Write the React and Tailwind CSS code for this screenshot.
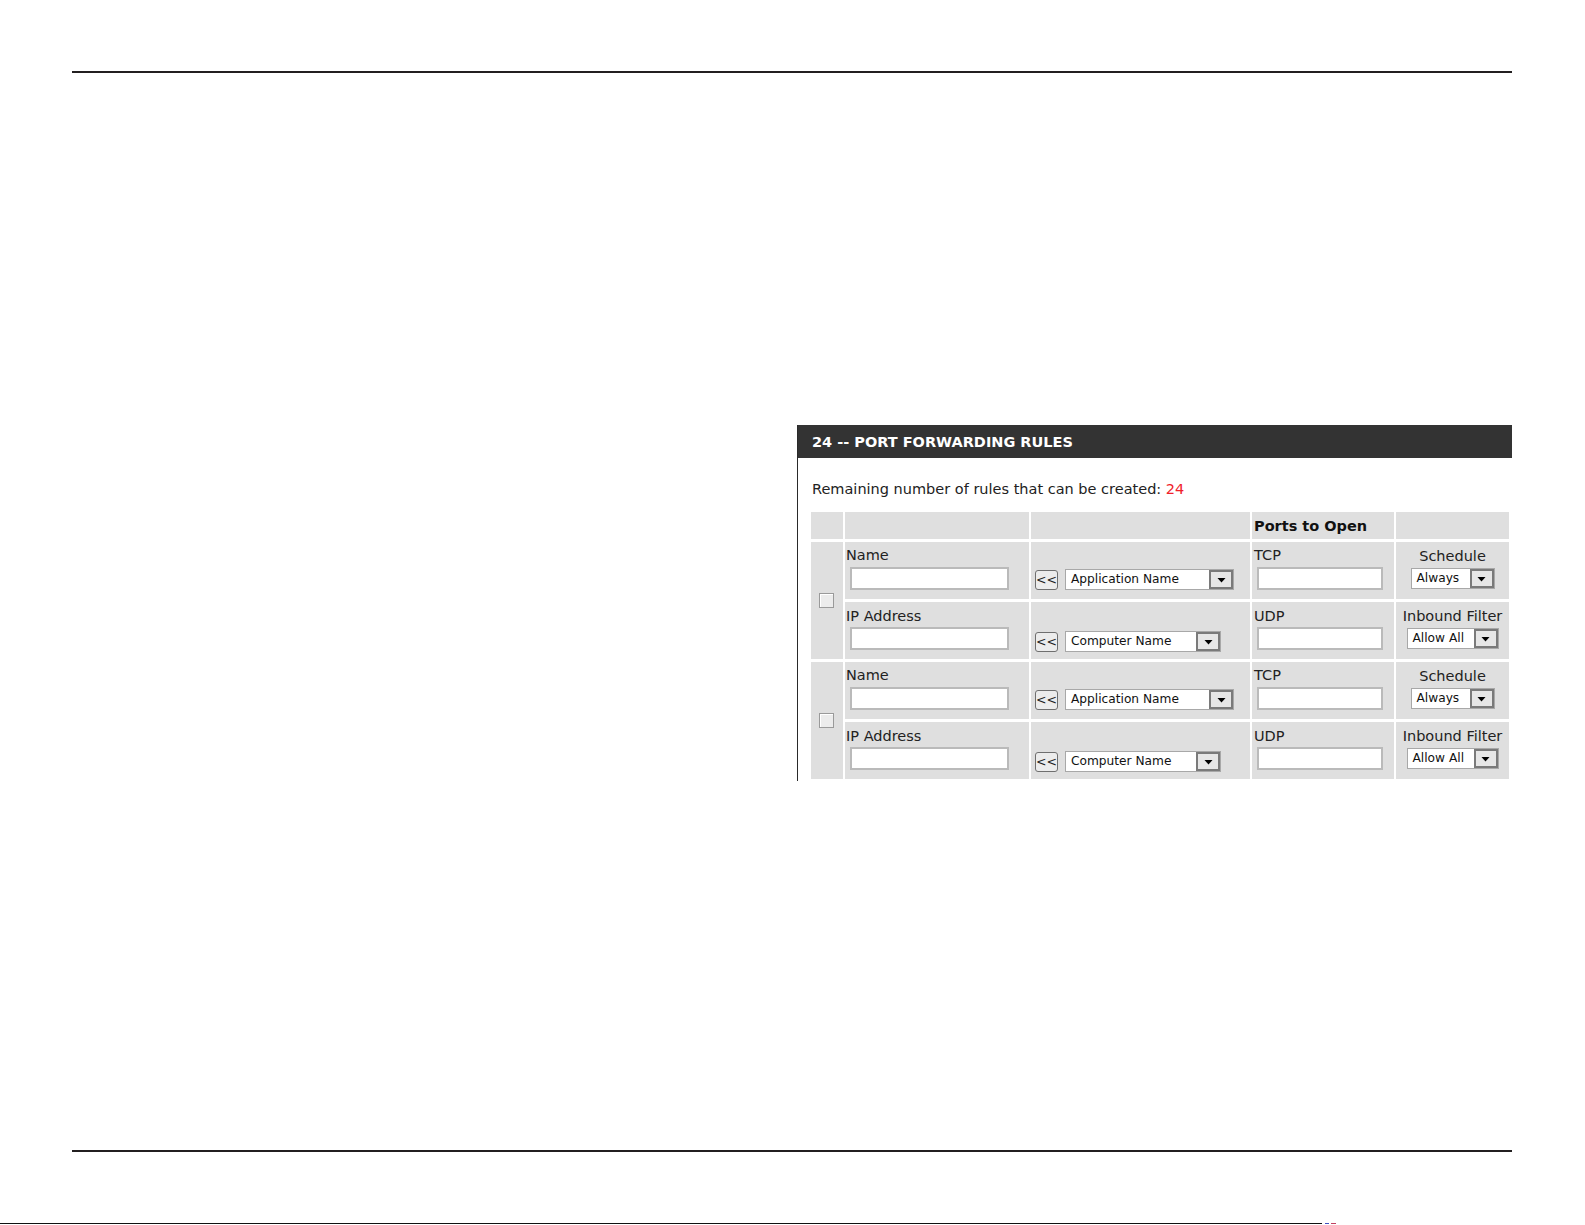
const TextBox = ({ w }) => (
  <div className={`h-[23px] ${w} bg-white border-2 border-[#bababa]`} />
);

const Arrow = () => (
  <svg width="9" height="5" viewBox="0 0 9 5">
    <path d="M0.5 0h8L4.5 4.5z" fill="#000" />
  </svg>
);

const Select = ({ label, w }) => (
  <div className={`flex ${w} h-[21px] bg-white border border-[#a8a8a8]`}>
    <span className="flex-1 pl-[5px] text-[12.2px] leading-[19px] text-[#111] whitespace-nowrap overflow-hidden">
      {label}
    </span>
    <span className="w-[24px] h-full bg-[#e6e6e6] border-2 border-[#7a7a7a] flex items-center justify-center pt-[2px]">
      <Arrow />
    </span>
  </div>
);

const BackButton = () => (
  <div className="w-[23px] h-[20px] rounded-[3px] border border-[#6f6f6f] bg-[#ececec] flex items-center justify-center text-[12.5px] leading-none text-[#222]">
    &lt;&lt;
  </div>
);

const Cell = ({ className = '', children }) => (
  <div className={`bg-[#dfdfdf] ${className}`}>{children}</div>
);

const RuleRows = () => (
  <>
    <Cell className="row-span-2 flex items-center justify-center">
      <div className="w-[15px] h-[15px] ml-[-1px] border border-[#9a9a9a] bg-[#ececec] shadow-[inset_1px_1px_0_#fff]" />
    </Cell>

    <Cell className="pl-[1px] pt-[4px]">
      <div className="text-[14.5px] leading-[18px] text-[#222]">Name</div>
      <div className="ml-[4px] mt-[3px]">
        <TextBox w="w-[159px]" />
      </div>
    </Cell>
    <Cell className="flex items-end gap-[7px] pl-[4px] pb-[9px]">
      <BackButton />
      <Select label="Application Name" w="w-[169px]" />
    </Cell>
    <Cell className="pl-[2px] pt-[4px]">
      <div className="text-[14.5px] leading-[18px] text-[#222]">TCP</div>
      <div className="ml-[3px] mt-[3px]">
        <TextBox w="w-[126px]" />
      </div>
    </Cell>
    <Cell className="flex flex-col items-center pt-[5px]">
      <div className="text-[14.5px] leading-[18px] text-[#222]">Schedule</div>
      <div className="mt-[3px]">
        <Select label="Always" w="w-[84px]" />
      </div>
    </Cell>

    <Cell className="pl-[1px] pt-[5px]">
      <div className="text-[14.5px] leading-[18px] text-[#222]">IP Address</div>
      <div className="ml-[4px] mt-[2px]">
        <TextBox w="w-[159px]" />
      </div>
    </Cell>
    <Cell className="flex items-end gap-[7px] pl-[4px] pb-[7px]">
      <BackButton />
      <Select label="Computer Name" w="w-[156px]" />
    </Cell>
    <Cell className="pl-[2px] pt-[5px]">
      <div className="text-[14.5px] leading-[18px] text-[#222]">UDP</div>
      <div className="ml-[3px] mt-[2px]">
        <TextBox w="w-[126px]" />
      </div>
    </Cell>
    <Cell className="flex flex-col items-center pt-[5px]">
      <div className="text-[14.5px] leading-[18px] text-[#222] whitespace-nowrap">Inbound Filter</div>
      <div className="mt-[3px]">
        <Select label="Allow All" w="w-[92px]" />
      </div>
    </Cell>
  </>
);

export default function App() {
  return (
    <div className="w-[1585px] h-[1225px] bg-white overflow-hidden font-['DejaVu_Sans',Verdana,sans-serif]">
      <div className="pt-[71px]">
        <div className="ml-[72px] w-[1440px] h-[2px] bg-[#231f20]" />
      </div>

      <div className="ml-[797px] mt-[352px] w-[715px] h-[356px] overflow-hidden border-l border-[#2a2a2a]">
        <div className="h-[33px] bg-[#333333] pl-[14px] pt-[3px] flex items-center text-[14.5px] font-bold text-white">
          24 -- PORT FORWARDING RULES
        </div>
        <div className="pl-[14px] pt-[22px] h-[52px] text-[14.5px] leading-[18px] text-[#222]">
          Remaining number of rules that can be created: <span className="text-[#f0202a]">24</span>
        </div>
        <div className="ml-[11px] p-[2px] grid grid-cols-[32px_184px_219px_142px_113px] grid-rows-[27px_57px_57px_57px_57px] gap-x-[2px] gap-y-[3px]">
          <Cell />
          <Cell />
          <Cell />
          <Cell className="pl-[2px] pt-[5px] text-[14.5px] leading-[18px] font-bold text-[#111]">
            Ports to Open
          </Cell>
          <Cell />
          <RuleRows />
          <RuleRows />
        </div>
      </div>

      <div className="mt-[369px] ml-[72px] w-[1440px] h-[2px] bg-[#231f20]" />

      <div className="mt-[71px] flex items-center">
        <div className="w-[1322px] h-[1px] bg-[#111]" />
        <div className="ml-[3px] w-[4px] h-[1px] bg-[#4050c0]" />
        <div className="ml-[2px] w-[5px] h-[1px] bg-[#c04060]" />
      </div>
    </div>
  );
}
